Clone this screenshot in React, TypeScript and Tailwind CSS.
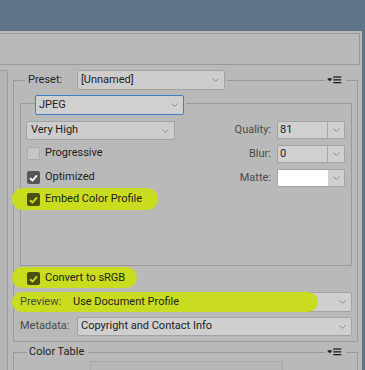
import React from "react";

const FONT = { fontFamily: "Roboto, 'Liberation Sans', Arial, sans-serif" };

function Chevron() {
  return (
    <svg width="7" height="4" viewBox="0 0 7 4" className="shrink-0">
      <path d="M0.5 0.5L3.5 3.5L6.5 0.5" fill="none" stroke="#8c8c8c" strokeWidth="1" />
    </svg>
  );
}

function MenuIcon() {
  return (
    <svg width="15" height="8" viewBox="0 0 15 8">
      <path d="M0 2.2H5.4L2.7 5.4Z" fill="#1e1e1e" />
      <rect x="6.2" y="0.4" width="8" height="1.3" fill="#1e1e1e" />
      <rect x="6.2" y="3.2" width="8" height="1.3" fill="#1e1e1e" />
      <rect x="6.2" y="6" width="8" height="1.3" fill="#1e1e1e" />
    </svg>
  );
}

function Check({ on, hl }: { on: boolean; hl?: boolean }) {
  if (!on)
    return <div className="w-[13px] h-[13px] shrink-0 rounded-[1px] border border-[#ababab] bg-[#c5c5c5]" />;
  return (
    <div
      className={
        hl
          ? "relative z-20 w-[13px] h-[13px] shrink-0 rounded-[2px] flex items-center justify-center bg-[#4a4e12]"
          : "w-[13px] h-[13px] shrink-0 rounded-[2px] flex items-center justify-center bg-[#565656]"
      }
    >
      <svg width="9" height="8" viewBox="0 0 9 8">
        <path d="M1 4.2L3.5 6.5L8 1.3" fill="none" stroke={hl ? "#cde022" : "#ffffff"} strokeWidth="1.9" />
      </svg>
    </div>
  );
}

function Corner({ side }: { side: "l" | "r" }) {
  return side === "l" ? (
    <div className="self-start mt-[10px] h-[10px] w-[12px] shrink-0 border-l border-t border-[#9a9a9a]" />
  ) : (
    <div className="self-start mt-[10px] h-[10px] w-[12px] shrink-0 border-r border-t border-[#9a9a9a]" />
  );
}

export default function App() {
  return (
    <div className="relative w-[365px] h-[370px] overflow-hidden bg-[#b9b9b9] flex flex-col text-[11px] text-[#1e1e1e]" style={FONT}>
      {/* highlights */}
      <div className="absolute z-10 left-[12px] top-[188px] w-[146px] h-[22px] rounded-full bg-[#c9dc1f]" />
      <div className="absolute z-10 left-[12px] top-[267px] w-[125px] h-[21px] rounded-full bg-[#c9dc1f]" />
      <div className="absolute z-10 left-[12px] top-[292px] w-[306px] h-[20px] rounded-full bg-[#c9dc1f]" />

      <div className="h-[31px] shrink-0 bg-[#5f7489]" />
      <div className="flex flex-1 min-h-0">
        <div className="w-[362px] flex flex-col">
          <div className="mt-[2px] h-[32px] w-[360px] shrink-0 border border-l-0 border-[#9a9a9a]" />
          <div className="mt-[5px] flex flex-1 min-h-0">
            <div className="w-[8px] shrink-0 border-r border-t border-[#9a9a9a] bg-[#b6b6b6]" />
            <div className="ml-[5px] flex flex-col w-[345px]">
              {/* Preset header */}
              <div className="flex h-[20px] shrink-0">
                <Corner side="l" />
                <div className="w-[52px] pl-[3px] flex items-center text-[#262626]">Preset:</div>
                <div className="w-[148px] h-[20px] shrink-0 flex items-center justify-between bg-[#cdcdcd] border border-[#a3a3a3] rounded-[2px] pl-[3px] pr-[5px]">
                  <span>[Unnamed]</span>
                  <Chevron />
                </div>
                <div className="self-start mt-[10px] ml-[2px] flex-1 h-px bg-[#9a9a9a]" />
                <div className="w-[21px] shrink-0 pl-[2px] pt-[6px]">
                  <MenuIcon />
                </div>
                <Corner side="r" />
              </div>
              {/* Preset body */}
              <div className="h-[252px] shrink-0 border-l border-r border-b border-[#9a9a9a] pl-[6px] pr-[5px] pt-[5px] flex flex-col">
                {/* JPEG header */}
                <div className="flex h-[20px] shrink-0">
                  <div className="self-start mt-[8px] h-[12px] w-[15px] shrink-0 border-l border-t border-[#9a9a9a]" />
                  <div className="w-[149px] h-[20px] shrink-0 flex items-center justify-between bg-[#d0d0d0] border border-[#3d80c9] rounded-[2px] pl-[3px] pr-[5px]">
                    <span>JPEG</span>
                    <Chevron />
                  </div>
                  <div className="self-start mt-[8px] ml-[2px] flex-1 h-px bg-[#9a9a9a]" />
                  <div className="self-start mt-[8px] h-[12px] w-[10px] shrink-0 border-r border-t border-[#9a9a9a]" />
                </div>
                {/* JPEG body */}
                <div className="h-[151px] shrink-0 border-l border-r border-b border-[#9a9a9a] pl-[5px] pr-[6px] pt-[6px] flex">
                  <div className="w-[149px] shrink-0 flex flex-col">
                    <div className="h-[19px] flex items-center justify-between bg-[#cdcdcd] border border-[#a3a3a3] rounded-[2px] pl-[4px] pr-[5px]">
                      <span>Very High</span>
                      <Chevron />
                    </div>
                    <div className="mt-[7px] h-[13px] flex items-center pl-[1px]">
                      <Check on={false} />
                      <span className="ml-[5px]">Progressive</span>
                    </div>
                    <div className="mt-[11px] h-[13px] flex items-center pl-[1px]">
                      <Check on />
                      <span className="ml-[5px]">Optimized</span>
                    </div>
                    <div className="mt-[9px] h-[13px] flex items-center pl-[1px]">
                      <Check on hl />
                      <span className="relative z-20 ml-[5px]">Embed Color Profile</span>
                    </div>
                  </div>
                  <div className="flex-1 flex flex-col items-end">
                    <div className="h-[18px] flex items-center">
                      <span className="text-[#4a4a4a]">Quality:</span>
                      <div className="ml-[6px] w-[68px] h-[18px] flex border border-[#a3a3a3] bg-[#d0d0d0] rounded-[1px]">
                        <div className="w-[50px] flex items-center pl-[2px] border-r border-[#a8a8a8]">81</div>
                        <div className="flex-1 flex items-center justify-center"><Chevron /></div>
                      </div>
                    </div>
                    <div className="mt-[6px] h-[18px] flex items-center">
                      <span className="text-[#4a4a4a]">Blur:</span>
                      <div className="ml-[6px] w-[68px] h-[18px] flex border border-[#a3a3a3] bg-[#d0d0d0] rounded-[1px]">
                        <div className="w-[50px] flex items-center pl-[2px] border-r border-[#a8a8a8]">0</div>
                        <div className="flex-1 flex items-center justify-center"><Chevron /></div>
                      </div>
                    </div>
                    <div className="mt-[6px] h-[18px] flex items-center">
                      <span className="text-[#4a4a4a]">Matte:</span>
                      <div className="ml-[6px] w-[68px] h-[18px] flex border border-[#a3a3a3] bg-[#d0d0d0] rounded-[1px]">
                        <div className="w-[50px] bg-white" />
                        <div className="flex-1 flex items-center justify-center"><Chevron /></div>
                      </div>
                    </div>
                  </div>
                </div>
                {/* Convert */}
                <div className="mt-[6px] h-[13px] flex items-center pl-[7px]">
                  <Check on hl />
                  <span className="relative z-20 ml-[5px]">Convert to sRGB</span>
                </div>
                {/* Preview */}
                <div className="mt-[7px] h-[20px] flex items-center">
                  <span className="relative z-20 w-[49px] text-[#4a4a4a]">Preview:</span>
                  <div className="w-[283px] h-[20px] flex items-center justify-between bg-[#cfcfcf] border border-[#a3a3a3] rounded-[2px] pl-[3px] pr-[5px]">
                    <span className="relative z-20">Use Document Profile</span>
                    <Chevron />
                  </div>
                </div>
                {/* Metadata */}
                <div className="mt-[5px] h-[19px] flex items-center">
                  <span className="w-[57px] text-[#4a4a4a]">Metadata:</span>
                  <div className="w-[275px] h-[19px] flex items-center justify-between bg-[#cfcfcf] border border-[#a3a3a3] rounded-[2px] pl-[3px] pr-[5px]">
                    <span>Copyright and Contact Info</span>
                    <Chevron />
                  </div>
                </div>
              </div>
              {/* Color Table header */}
              <div className="mt-[1px] flex h-[18px] shrink-0">
                <div className="self-start mt-[9px] h-[9px] w-[14px] shrink-0 border-l border-t border-[#9a9a9a]" />
                <div className="pl-[2px] pr-[4px] flex items-center">Color Table</div>
                <div className="self-start mt-[9px] flex-1 h-px bg-[#9a9a9a]" />
                <div className="w-[21px] shrink-0 pl-[2px] pt-[5px]">
                  <MenuIcon />
                </div>
                <div className="self-start mt-[9px] h-[9px] w-[12px] shrink-0 border-r border-t border-[#9a9a9a]" />
              </div>
              <div className="flex-1 border-l border-r border-[#9a9a9a] pl-[76px]">
                <div className="w-[193px] h-[20px] border border-[#a6a6a6] bg-[#b7b7b7]" />
              </div>
            </div>
          </div>
        </div>
        <div className="w-[3px] shrink-0 bg-[#5f7489]" />
      </div>
    </div>
  );
}
